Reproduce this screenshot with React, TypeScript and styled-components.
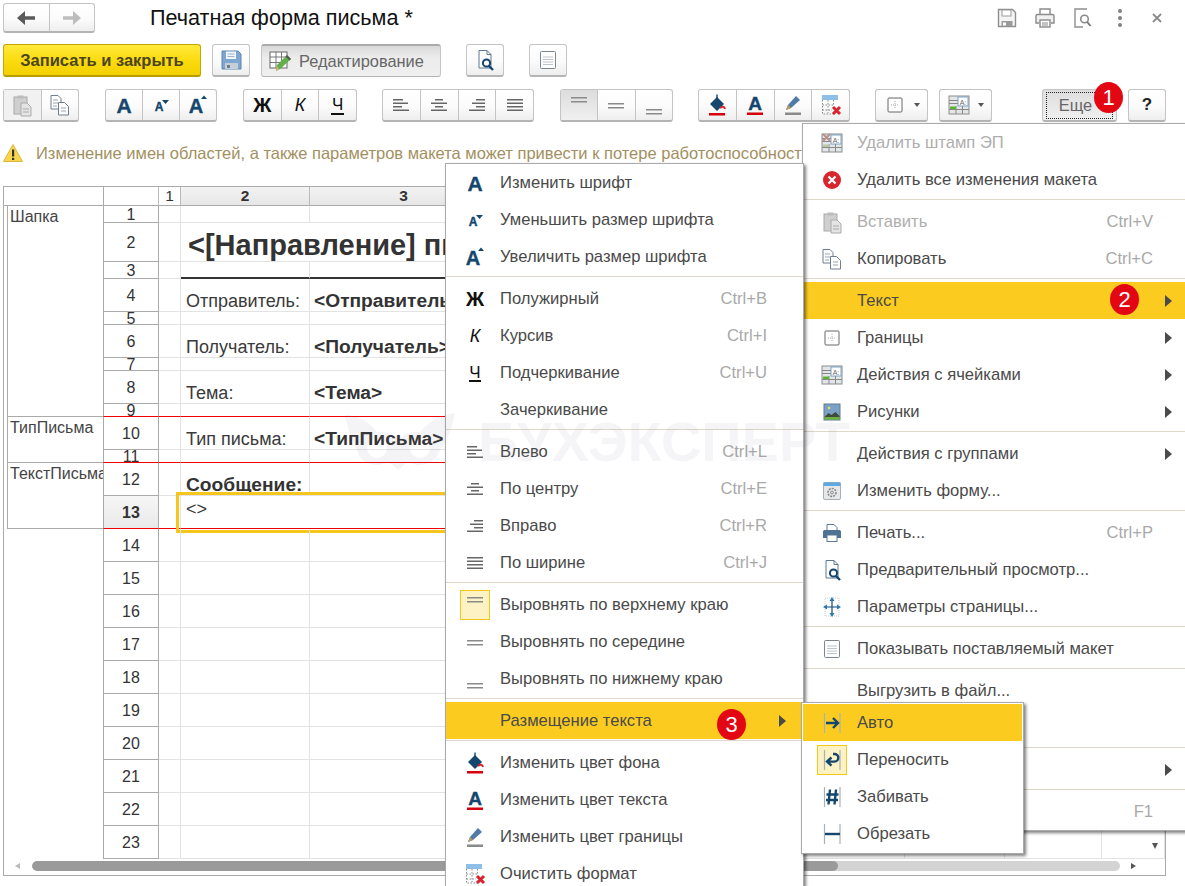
import React from "react";
import styled, { createGlobalStyle, css } from "styled-components";

const navy = "#14466e";

const Global = createGlobalStyle`
  html, body { margin: 0; padding: 0; background: #fff; }
  body { font-family: "Liberation Sans", Arial, sans-serif; color: #444; }
  * { box-sizing: border-box; }
`;

const Page = styled.div`
  position: relative;
  width: 1185px;
  height: 886px;
  overflow: hidden;
  background: #fff;
`;

const HeaderBar = styled.header`
  display: flex;
  align-items: center;
  height: 33px;
  padding: 3px 9px 0 3px;
`;
const Title = styled.h1`
  margin: 0 0 0 55px;
  font-size: 21.6px;
  font-weight: 400;
  color: #111;
  flex: 1;
  line-height: 30px;
`;
const HeaderTools = styled.div`
  display: flex;
  align-items: center;
`;
const HeaderTool = styled.span`
  width: 37.5px;
  height: 24px;
  display: flex;
  align-items: center;
  justify-content: center;
`;

const CommandRow = styled.div`
  display: flex;
  align-items: stretch;
  height: 33px;
  margin-top: ${(p) => p.$top}px;
  padding-left: 3px;
`;

const buttonBase = css`
  display: flex;
  align-items: center;
  justify-content: center;
  height: 33px;
  border: 1px solid #c4c4c4;
  border-bottom: 2px solid #b4b4b4;
  border-radius: 3px;
  background: linear-gradient(#ffffff 0%, #fbfbfb 55%, #eeeeee 100%);
  padding: 0;
`;
const Yellow = styled.div`
  ${buttonBase};
  width: 198px;
  margin-right: 11px;
  border: 1px solid #c5a600;
  border-bottom: 2px solid #b99d00;
  background: linear-gradient(#ffe93c 0%, #fbdc10 50%, #f3d000 100%);
  font-size: 16.5px;
  font-weight: 700;
  color: #4c4520;
`;
const ToolButton = styled.div`
  ${buttonBase};
  width: ${(p) => p.$w || 38}px;
  margin-left: ${(p) => p.$ml || 0}px;
`;
const PressedButton = styled.div`
  ${buttonBase};
  width: 180px;
  margin-left: 11px;
  padding-left: 6px;
  justify-content: flex-start;
  gap: 7px;
  border-bottom: 1px solid #b4b4b4;
  border-top: 2px solid #aaa;
  background: linear-gradient(#d9d9d9 0%, #ececec 40%, #efefef 100%);
  font-size: 16.4px;
  color: #666;
`;
const Group = styled.div`
  display: flex;
  flex: none;
  width: ${(p) => p.$w}px;
  height: ${(p) => p.$h || 33}px;
  margin-left: ${(p) => p.$ml || 0}px;
  border: 1px solid #c4c4c4;
  border-bottom: 2px solid #b4b4b4;
  border-radius: 3px;
  overflow: hidden;
  background: linear-gradient(#ffffff 0%, #fbfbfb 55%, #eeeeee 100%);
`;
const Segment = styled.div`
  flex: 1;
  display: flex;
  align-items: center;
  justify-content: center;
  border-left: ${(p) => (p.$first ? "none" : "1px solid #c4c4c4")};
  ${(p) => p.$on && "background: linear-gradient(#dcdcdc, #f0f0f0);"}
  ${(p) => p.$dim && "background: #f1f1f1;"}
`;
const GlyphBold = styled.span`
  font-size: 20px;
  font-weight: 700;
  color: #111;
`;
const GlyphItalic = styled.span`
  font-size: 18px;
  font-style: italic;
  color: #111;
`;
const GlyphUnder = styled.span`
  font-size: 17px;
  color: #111;
  border-bottom: 2px solid #111;
  line-height: 17px;
  padding: 0 1px;
`;
const Caret = styled.i`
  width: 0;
  height: 0;
  border-left: 3.5px solid transparent;
  border-right: 3.5px solid transparent;
  border-top: 4px solid #555;
  margin-left: 7px;
`;
const MoreButton = styled.div`
  ${buttonBase};
  position: relative;
  width: 75px;
  margin-left: 50px;
  padding-right: 8px;
  background: linear-gradient(#dedede, #f0f0f0);
  font-size: 16.4px;
  color: #666;
  &::after {
    content: "";
    position: absolute;
    inset: 2px 3px 1px 3px;
    border: 1px dotted #222;
  }
`;
const Help = styled.div`
  ${buttonBase};
  width: 38px;
  margin-left: 11px;
  font-size: 17px;
  font-weight: 700;
  color: #222;
`;

const Warning = styled.div`
  display: flex;
  align-items: center;
  height: 64px;
  padding: 0 0 2px 3px;
  gap: 13px;
  font-size: 16.5px;
  color: #a3905f;
  white-space: nowrap;
`;

const Sheet = styled.section`
  margin-left: 3px;
  width: 1163px;
  height: 690px;
  border: 1px solid #aaa;
  display: flex;
  flex-direction: column;
  position: relative;
`;
const SheetHead = styled.div`
  display: flex;
  height: 19px;
  flex: none;
`;
const Corner = styled.div`
  width: 99px;
  border-bottom: 1px solid #aaa;
`;
const HeadCell = styled.div`
  flex: ${(p) => (p.$w ? `0 0 ${p.$w}px` : "1")};
  display: flex;
  align-items: center;
  justify-content: center;
  font-size: 15.5px;
  color: #333;
  border-left: ${(p) => (p.$edge ? "1px solid #aaa" : "none")};
  border-right: 1px solid #bbb;
  border-bottom: 1px solid #aaa;
  ${(p) => p.$sel && "font-weight:700; background:linear-gradient(#f3f3f3,#e6e6e6);"}
`;
const SheetBody = styled.div`
  flex: 1;
  display: flex;
  min-height: 0;
  overflow: hidden;
`;
const Groups = styled.div`
  width: 99px;
  flex: none;
  padding-left: 3px;
`;
const Band = styled.div`
  height: ${(p) => p.$h}px;
  border-left: 1px solid #aaa;
  border-bottom: 1px solid #aaa;
  padding: 2px 0 0 2px;
  font-size: 16px;
  line-height: 18px;
  color: #444;
  overflow: hidden;
  white-space: nowrap;
`;
const Rows = styled.div`
  flex: 1;
  min-width: 0;
`;
const Row = styled.div`
  position: relative;
  display: flex;
  height: ${(p) => p.$h}px;
`;
const RowNo = styled.div`
  flex: 0 0 56px;
  display: flex;
  align-items: center;
  justify-content: center;
  overflow: hidden;
  padding-top: 1px;
  font-size: 16px;
  line-height: 18px;
  color: #333;
  border-left: 1px solid #aaa;
  border-right: 1px solid #aaa;
  border-bottom: 1px solid ${(p) => (p.$line === "red" ? "#f00000" : "#aaa")};
  background: #fff;
  ${(p) => p.$on && "font-weight:700; background:linear-gradient(#f6f6f6,#e9e9e9);"}
`;
const Cell = styled.div`
  flex: ${(p) => (p.$w ? `0 0 ${p.$w}px` : "1")};
  display: flex;
  align-items: ${(p) => p.$align || "flex-end"};
  padding: ${(p) => p.$pad || "0 0 0 5px"};
  white-space: nowrap;
  font-size: 18px;
  line-height: 20px;
  color: #3a3a3a;
  border-right: ${(p) => (p.$open ? "none" : "1px solid #e3e3e3")};
  border-bottom: ${(p) =>
    p.$line === "red"
      ? "1px solid #f00000"
      : p.$line === "thick"
      ? "2px solid #333"
      : "1px solid #e3e3e3"};
`;
const Strong = styled.b`
  font-size: 19.2px;
  font-weight: 700;
  color: #333;
`;
const BigTitle = styled.b`
  font-size: 29px;
  line-height: 32px;
  font-weight: 700;
  color: #333;
`;
const Message = styled.b`
  font-size: 19.2px;
  line-height: 20px;
  color: #333;
`;
const Selection = styled.div`
  position: absolute;
  left: 73px;
  top: -4px;
  width: 500px;
  height: 41px;
  border: 3px solid #f6c61c;
  pointer-events: none;
`;
const DownMark = styled.i`
  position: absolute;
  right: 7px;
  bottom: 26px;
  width: 0;
  height: 0;
  border-left: 3.5px solid transparent;
  border-right: 3.5px solid transparent;
  border-top: 6px solid #555;
`;
const ScrollRow = styled.div`
  flex: none;
  height: 16px;
  display: flex;
  align-items: center;
  padding: 0 0 2px 11px;
`;
const ArrowL = styled.i`
  width: 0;
  height: 0;
  border-top: 3px solid transparent;
  border-bottom: 3px solid transparent;
  border-right: 5px solid #bbb;
  margin-right: 12px;
`;
const ArrowR = styled.i`
  width: 0;
  height: 0;
  border-top: 3px solid transparent;
  border-bottom: 3px solid transparent;
  border-left: 5px solid #555;
  margin-left: 11px;
`;
const Track = styled.div`
  width: 1088px;
  height: 10px;
  border-radius: 5px;
  background: #d3d3d3;
  overflow: hidden;
`;
const Thumb = styled.div`
  height: 100%;
  border-radius: 5px;
  background: #9a9a9a;
`;

const Menu = styled.nav`
  position: absolute;
  left: ${(p) => p.$x}px;
  top: ${(p) => p.$y}px;
  width: ${(p) => p.$w}px;
  z-index: ${(p) => p.$z};
  background: #fff;
  border: 1px solid #aaa;
  box-shadow: 2px 2px 3px rgba(0, 0, 0, 0.5);
  padding: ${(p) => p.$pad || "0"};
`;
const Item = styled.div`
  position: relative;
  height: 37px;
  display: flex;
  align-items: center;
  padding-left: 17px;
  padding-right: ${(p) => p.$pr ?? 17}px;
  font-size: 16.6px;
  white-space: nowrap;
  color: ${(p) => (p.$off ? "#aeaeae" : "#4a4a4a")};
  background: ${(p) => (p.$hl ? "#fbcc1f" : "transparent")};
`;
const IconSlot = styled.span`
  width: 24px;
  height: 24px;
  flex: none;
  margin-right: 13px;
  display: block;
  ${(p) =>
    p.$active &&
    "background:#fdf2c4; box-shadow:0 0 0 2px #fdf2c4, 0 0 0 3px #f6c61c;"}
`;
const Shortcut = styled.span`
  margin-left: auto;
  color: #a9a9a9;
`;
const Chevron = styled.i`
  flex: none;
  width: 7px;
  height: 12px;
  margin-left: ${(p) => (p.$auto ? "auto" : "12px")};
  ${(p) =>
    p.$show
      ? `border-top:6px solid transparent;border-bottom:6px solid transparent;border-left:7px solid #4a4a4a;`
      : ""}
`;
const Sep = styled.div`
  height: 1px;
  margin: 1px 0 3px;
  background: #ddd8c8;
`;
const Badge = styled.span`
  position: absolute;
  left: ${(p) => p.$x}px;
  top: ${(p) => p.$y}px;
  width: 29px;
  height: 31px;
  border-radius: 50%;
  background: #e30613;
  color: #fff;
  font-size: 22px;
  display: flex;
  align-items: center;
  justify-content: center;
  z-index: 5;
`;
const Watermark = styled.div`
  position: absolute;
  left: 345px;
  top: 412px;
  z-index: 20;
  display: flex;
  align-items: center;
  gap: 7px;
  pointer-events: none;
  font-size: 56px;
  font-weight: 700;
  line-height: 60px;
  color: rgba(110, 120, 140, 0.07);
`;

/* ---------- icons ---------- */
const S: React.FC<{ children: React.ReactNode; w?: number; h?: number; box?: string }> = ({ children, w = 24, h = 24, box }) => (
  <svg width={w} height={h} viewBox={box || `0 0 ${w} ${h}`} style={{ display: "block" }}>
    {children}
  </svg>
);
const Lines = ({ l, c = "#666", t = 1.5 }: { l: number[][]; c?: string; t?: number }) => (
  <S>
    {l.map(([x, y, w], i) => (
      <rect key={i} x={x} y={y} width={w} height={t} fill={c} />
    ))}
  </S>
);
const AlignL = () => <Lines l={[[4, 6, 10], [4, 9.5, 15], [4, 13, 9], [4, 16.5, 16]]} />;
const AlignC = () => <Lines l={[[8, 6, 8], [4, 9.5, 16], [8, 13, 8], [4, 16.5, 16]]} />;
const AlignR = () => <Lines l={[[11, 6, 9], [7, 9.5, 13], [11, 13, 9], [4, 16.5, 16]]} />;
const AlignJ = () => <Lines l={[[4, 6, 16], [4, 9.5, 16], [4, 13, 16], [4, 16.5, 16]]} />;
const VTop = () => <Lines c="#8a8a8a" l={[[4, 4, 16], [4, 8, 16]]} />;
const VMid = () => <Lines c="#8a8a8a" l={[[4, 10, 16], [4, 14, 16]]} />;
const VBot = () => <Lines c="#8a8a8a" l={[[4, 16, 16], [4, 20, 16]]} />;

const LetterA = ({ size = 21, x = 12, y = 20 }: { size?: number; x?: number; y?: number }) => (
  <text x={x} y={y} fontSize={size} fontWeight={700} fontFamily="Liberation Sans" fill={navy} stroke={navy} strokeWidth={0.4} textAnchor="middle">
    A
  </text>
);
const FontIcon = () => <S><LetterA /></S>;
const FontDown = () => (
  <S>
    <LetterA size={12} x={10} y={18} />
    <polygon points="13,7 20,7 16.5,11" fill={navy} />
  </S>
);
const FontUp = () => (
  <S>
    <LetterA size={20} x={10} y={20} />
    <polygon points="15,6 21,6 18,2.5" fill={navy} />
  </S>
);
const BoldIcon = () => <S><text x="12" y="19" fontSize="20" fontWeight="700" fontFamily="Liberation Sans" fill="#111" textAnchor="middle">Ж</text></S>;
const ItalicIcon = () => <S><text x="12" y="18" fontSize="18" fontStyle="italic" fontFamily="Liberation Sans" fill="#111" textAnchor="middle">К</text></S>;
const UnderIcon = () => (
  <S>
    <text x="12" y="17" fontSize="17" fontFamily="Liberation Sans" fill="#111" textAnchor="middle">Ч</text>
    <rect x="6" y="19" width="12" height="2" fill="#111" />
  </S>
);
const Fill = () => (
  <S>
    <rect x="11.3" y="1.5" width="1.4" height="6" fill={navy} />
    <polygon points="12,4 5,11 12,18 19,11" fill={navy} />
    <path d="M15 15 q4 -3 5 1" fill="none" stroke="#d8232a" strokeWidth="2" />
    <rect x="4" y="20" width="16" height="2.5" fill="#d8000f" />
  </S>
);
const TextColor = () => (
  <S>
    <LetterA size={19} y={17} />
    <rect x="4" y="19.5" width="16" height="2.5" fill="#d8000f" />
  </S>
);
const Pencil = () => (
  <S>
    <polygon points="15,3 19,7 10,15 5,17 7,12" fill="#4f7ba6" />
    <polygon points="7,12 10,15 5,17" fill="#b89a63" />
    <rect x="4" y="19.5" width="16" height="2.5" fill="#8a8a8a" />
  </S>
);
const ClearFormat = () => (
  <S>
    <rect x="3" y="2" width="16" height="5" fill="#8fbfe6" />
    <path d="M3.5 7V21H16M9 7V20M14.5 7V13M3.5 12H15M3.5 17H13" stroke="#888" strokeDasharray="1.5 1.5" fill="none" />
    <path d="M14 14l7 7M21 14l-7 7" stroke="#d9232e" strokeWidth="3" />
  </S>
);
const BordersIcon = () => (
  <S>
    <rect x="5" y="5" width="14" height="14" rx="1" fill="#fff" stroke="#666" />
    <path d="M12 8v8M8 12h8" stroke="#aaa" strokeDasharray="1 1" />
  </S>
);
const CellsIcon = ({ gray }: { gray?: boolean }) => (
  <S>
    <rect x="2" y="3" width="20" height="18" fill="#e3e6e8" stroke="#8c8c8c" />
    <rect x="11" y="4" width="10" height="9" fill="#fff" stroke="#7da4c6" />
    <text x="16" y="11.5" fontSize="7" fontFamily="Liberation Sans" fill="#666" textAnchor="middle">A:</text>
    <path d="M2 7.5h9M2 10.5h9M2 16.5h20M9 13v8M15.5 13v8" stroke="#888" />
    <rect x="3" y="13.5" width="6" height="2.5" fill={gray ? "#b9c7a8" : "#5ab52e"} />
    {gray && <path d="M3 3l7 7M10 3l-7 7" stroke="#b9928a" strokeWidth="2" />}
  </S>
);
const Paste = () => (
  <S>
    <rect x="4" y="4" width="13" height="17" fill="#cfcfcf" stroke="#aaa" />
    <rect x="7.5" y="2.5" width="6" height="3" fill="#bbb" />
    <path d="M11 10h6l4 4v9H11z" fill="#e4e4e4" stroke="#aaa" />
    <path d="M13 16h6M13 19h6" stroke="#aaa" />
  </S>
);
const Copy = () => (
  <S>
    <path d="M3 2.5h7l3 3V16H3z" fill="#fff" stroke="#6d7f90" />
    <path d="M5 7h5M5 10h5M5 13h4" stroke="#9aa5b0" />
    <path d="M10.5 9.5h6l4 4V22h-10z" fill="#fff" stroke="#6d7f90" />
    <path d="M13 15h5M13 18h5" stroke="#9aa5b0" />
  </S>
);
const Floppy = () => (
  <S>
    <path d="M3 3h16l3 3v15H3z" fill="#7da6d0" stroke="#5a86b2" />
    <rect x="7" y="3.5" width="10" height="7.5" fill="#f2f6fa" />
    <path d="M8.5 6h7M8.5 8.5h7" stroke="#9ab4cc" />
    <rect x="6" y="15" width="13" height="6" fill="#c7cfd6" />
    <rect x="8" y="17" width="3" height="3" fill="#6b7c8c" />
  </S>
);
const EditGrid = () => (
  <S>
    <rect x="2" y="3" width="17" height="16" fill="#fff" stroke="#666" />
    <path d="M2 8h17M2 13.5h17M8 3v16M13.5 3v16" stroke="#777" />
    <polygon points="19,6 23,10 12,20 8,22 9,16" fill="#62b04a" />
    <polygon points="19,6 23,10 21.5,11.5 17.5,7.5" fill="#555" />
    <polygon points="9,17.5 11,20 8,22" fill="#e1b36b" />
  </S>
);
const Preview = () => (
  <S>
    <path d="M6 2.5h8l4 4V20H6z" fill="#fff" stroke="#5c7894" />
    <path d="M14 2.5v4h4" fill="none" stroke="#5c7894" />
    <circle cx="13.5" cy="15" r="3.6" fill="#fff" stroke={navy} strokeWidth="2" />
    <path d="M16 18l4 4" stroke={navy} strokeWidth="2.4" />
  </S>
);
const DocLines = () => (
  <S>
    <rect x="4.5" y="3.5" width="15" height="17" rx="1" fill="#fff" stroke="#7c8690" />
    <path d="M7 9h10M7 11.5h10M7 14h10M7 16.5h10" stroke="#bcc3ca" />
  </S>
);
const DangerCircle = () => (
  <S>
    <circle cx="12" cy="12" r="9" fill="#d7262e" />
    <path d="M8.5 8.5l7 7M15.5 8.5l-7 7" stroke="#fff" strokeWidth="2.2" />
  </S>
);
const Picture = () => (
  <S>
    <rect x="4" y="4" width="16" height="16" fill="#7aa2c8" stroke="#687a8a" />
    <circle cx="9" cy="8" r="1.2" fill="#f4e04a" />
    <path d="M4.5 17l4-4 3 2 4-3 4 4v2h-15z" fill="#3e4a3a" />
    <rect x="4.5" y="17" width="15" height="2.6" fill="#6db33f" />
  </S>
);
const FormGear = () => (
  <S>
    <rect x="3.5" y="3.5" width="17" height="17" rx="1.5" fill="#e6e8ea" stroke="#a8b0b6" />
    <rect x="3.5" y="3.5" width="17" height="3.5" fill="#62a8e0" />
    <circle cx="12" cy="13.5" r="4" fill="none" stroke="#888" strokeWidth="1.6" strokeDasharray="2 1" />
    <circle cx="12" cy="13.5" r="1.4" fill="none" stroke="#888" />
  </S>
);
const PrinterBlue = () => (
  <S>
    <path d="M7 3.5h7l3 3V10H7z" fill="#fff" stroke="#5c7894" />
    <path d="M3 10.5q0-1.5 1.5-1.5h15q1.5 0 1.5 1.5V17H3z" fill="#4f7193" />
    <rect x="7" y="14" width="10" height="6.5" fill="#fff" stroke="#5c7894" />
  </S>
);
const PageParams = () => (
  <S>
    <rect x="5" y="3" width="14" height="18" fill="none" stroke="#c7ccd0" strokeDasharray="1 1" />
    <path d="M12 4v16M5 12h14" stroke={navy} strokeWidth="1.2" />
    <polygon points="12,2 9.5,6 14.5,6" fill="#2a76b0" />
    <polygon points="12,22 9.5,18 14.5,18" fill="#2a76b0" />
    <polygon points="3,12 7,9.5 7,14.5" fill="#2a76b0" />
    <polygon points="21,12 17,9.5 17,14.5" fill="#2a76b0" />
  </S>
);
const Rails = () => <path d="M4.5 2v20M20 2v20" stroke="#a9b1b8" strokeWidth="1.2" />;
const Auto = () => (
  <S>
    <Rails />
    <path d="M6 12h12M13 7l5 5-5 5" fill="none" stroke={navy} strokeWidth="2.4" />
  </S>
);
const Wrap = () => (
  <S>
    <Rails />
    <path d="M13 6h1.5a3.8 3.8 0 0 1 0 7.6H8M11.5 9.5L7 13.6l4.5 4.1" fill="none" stroke={navy} strokeWidth="2.4" />
  </S>
);
const Hash = () => (
  <S>
    <Rails />
    <path d="M10 4.5L8.5 19.5M16 4.5L14.5 19.5M6.5 9.5h12M6 15h12" fill="none" stroke={navy} strokeWidth="2.4" />
  </S>
);
const Cut = () => (
  <S>
    <Rails />
    <path d="M5 12h15" stroke={navy} strokeWidth="2.4" />
  </S>
);
const OutSave = () => (
  <S>
    <path d="M3.5 3.5h14l3 3v14h-17z" fill="#f4f4f4" stroke="#8f8f8f" strokeWidth="1.4" />
    <rect x="7" y="4" width="9" height="6" fill="#fff" stroke="#9a9a9a" />
    <rect x="6.5" y="15" width="11" height="5.5" fill="#9a9a9a" />
    <rect x="8" y="16.5" width="3" height="3" fill="#fff" />
  </S>
);
const OutPrint = () => (
  <S>
    <path d="M7 9V3h10v6" fill="#fff" stroke="#8a8a8a" strokeWidth="1.4" />
    <path d="M6 17H3V10q0-1.5 1.5-1.5h15Q21 8.5 21 10v7h-3" fill="#f0f0f0" stroke="#8a8a8a" strokeWidth="1.4" />
    <rect x="7" y="14" width="10" height="7" fill="#fff" stroke="#8a8a8a" strokeWidth="1.4" />
    <path d="M9 17h6M9 19h6" stroke="#8a8a8a" />
  </S>
);
const OutPreview = () => (
  <S>
    <path d="M17 3H5v18h8" fill="none" stroke="#8f8f8f" strokeWidth="1.4" />
    <circle cx="14.5" cy="13" r="3.8" fill="#fff" stroke="#8a8a8a" strokeWidth="1.6" />
    <path d="M17.3 16l3.2 4" stroke="#7a7a7a" strokeWidth="2" />
  </S>
);
const Dots = () => (
  <S>
    <circle cx="12" cy="5" r="2" fill="#808080" />
    <circle cx="12" cy="12" r="2" fill="#808080" />
    <circle cx="12" cy="19" r="2" fill="#808080" />
  </S>
);
const CloseX = () => (
  <S>
    <path d="M8 8l8 8M16 8l-8 8" stroke="#8a8a8a" strokeWidth="1.8" />
  </S>
);
const NavArrow = ({ right, c }: { right?: boolean; c: string }) => (
  <S>
    <g transform={right ? "" : "matrix(-1 0 0 1 24 0)"}>
      <path d="M3 10.2h10V5l8 7-8 7v-5.2H3z" fill={c} />
    </g>
  </S>
);
const WarnIcon = () => (
  <S w={20} h={20}>
    <polygon points="10,1.5 19.5,18.5 0.5,18.5" fill="#f8d64a" stroke="#dcb640" strokeLinejoin="round" />
    <rect x="9" y="6.5" width="2.2" height="7" fill="#333" />
    <rect x="9" y="14.8" width="2.2" height="2.2" fill="#333" />
  </S>
);
const Owl = () => (
  <svg width="126" height="60" viewBox="0 0 126 60" style={{ display: "block" }}>
    <path
      fillRule="evenodd"
      d="M0 3Q20 4 32 20Q43 18 53 28Q63 18 75 20Q88 4 110 1Q105 26 95 38Q90 53 72 53L62 50L53 58L44 50L34 53Q16 53 12 38Q4 23 0 3Z
         M22 36a10 10 0 1 0 20 0a10 10 0 1 0 -20 0Z M65 36a10 10 0 1 0 20 0a10 10 0 1 0 -20 0Z"
      fill="rgba(110,120,140,0.08)"
    />
  </svg>
);

/* ---------- data ---------- */
type MI = {
  icon?: React.ReactNode; label?: string; short?: string; arrow?: boolean; hl?: boolean;
  off?: boolean; active?: boolean; badge?: [string, number, number]; sep?: boolean;
};
const textMenu: MI[] = [
  { icon: <FontIcon />, label: "Изменить шрифт" },
  { icon: <FontDown />, label: "Уменьшить размер шрифта" },
  { icon: <FontUp />, label: "Увеличить размер шрифта" },
  { sep: true },
  { icon: <BoldIcon />, label: "Полужирный", short: "Ctrl+B" },
  { icon: <ItalicIcon />, label: "Курсив", short: "Ctrl+I" },
  { icon: <UnderIcon />, label: "Подчеркивание", short: "Ctrl+U" },
  { label: "Зачеркивание" },
  { sep: true },
  { icon: <AlignL />, label: "Влево", short: "Ctrl+L" },
  { icon: <AlignC />, label: "По центру", short: "Ctrl+E" },
  { icon: <AlignR />, label: "Вправо", short: "Ctrl+R" },
  { icon: <AlignJ />, label: "По ширине", short: "Ctrl+J" },
  { sep: true },
  { icon: <VTop />, active: true, label: "Выровнять по верхнему краю" },
  { icon: <VMid />, label: "Выровнять по середине" },
  { icon: <VBot />, label: "Выровнять по нижнему краю" },
  { sep: true },
  { label: "Размещение текста", arrow: true, hl: true, badge: ["3", 271, 7] },
  { sep: true },
  { icon: <Fill />, label: "Изменить цвет фона" },
  { icon: <TextColor />, label: "Изменить цвет текста" },
  { icon: <Pencil />, label: "Изменить цвет границы" },
  { icon: <ClearFormat />, label: "Очистить формат" },
];
const moreMenu: MI[] = [
  { icon: <CellsIcon gray />, label: "Удалить штамп ЭП", off: true },
  { icon: <DangerCircle />, label: "Удалить все изменения макета" },
  { sep: true },
  { icon: <Paste />, label: "Вставить", short: "Ctrl+V", off: true },
  { icon: <Copy />, label: "Копировать", short: "Ctrl+C" },
  { sep: true },
  { label: "Текст", arrow: true, hl: true, badge: ["2", 307, 2] },
  { icon: <BordersIcon />, label: "Границы", arrow: true },
  { icon: <CellsIcon />, label: "Действия с ячейками", arrow: true },
  { icon: <Picture />, label: "Рисунки", arrow: true },
  { sep: true },
  { label: "Действия с группами", arrow: true },
  { icon: <FormGear />, label: "Изменить форму..." },
  { sep: true },
  { icon: <PrinterBlue />, label: "Печать...", short: "Ctrl+P" },
  { icon: <Preview />, label: "Предварительный просмотр..." },
  { icon: <PageParams />, label: "Параметры страницы..." },
  { sep: true },
  { icon: <DocLines />, label: "Показывать поставляемый макет" },
  { sep: true },
  { label: "Выгрузить в файл..." },
  { label: "Загрузить из файла..." },
  { sep: true },
  { label: "Сервис", arrow: true },
  { sep: true },
  { label: "Справка", short: "F1" },
];
const placeMenu: MI[] = [
  { icon: <Auto />, label: "Авто", hl: true },
  { icon: <Wrap />, label: "Переносить", active: true },
  { icon: <Hash />, label: "Забивать" },
  { icon: <Cut />, label: "Обрезать" },
];

const MenuItems = ({ items, tail = true }: { items: MI[]; tail?: boolean }) => (
  <>
    {items.map((it, i) =>
      it.sep ? (
        <Sep key={i} />
      ) : (
        <Item key={i} $hl={it.hl} $off={it.off} $pr={tail ? undefined : 0}>
          <IconSlot $active={it.active}>{it.icon}</IconSlot>
          {it.label}
          {it.badge && <Badge $x={it.badge[1]} $y={it.badge[2]}>{it.badge[0]}</Badge>}
          {tail && (
            <>
              {it.short && <Shortcut>{it.short}</Shortcut>}
              <Chevron $show={it.arrow} $auto={!it.short} />
            </>
          )}
        </Item>
      )
    )}
  </>
);

type RowDef = { n: number; h: number; line?: string };
const rowDefs: RowDef[] = [
  { n: 1, h: 17 }, { n: 2, h: 39 }, { n: 3, h: 17, line: "thick" }, { n: 4, h: 33 }, { n: 5, h: 13 },
  { n: 6, h: 33 }, { n: 7, h: 13 }, { n: 8, h: 33 }, { n: 9, h: 13, line: "red" }, { n: 10, h: 33 },
  { n: 11, h: 13, line: "red" }, { n: 12, h: 33 }, { n: 13, h: 33, line: "red" },
  ...Array.from({ length: 10 }, (_, i) => ({ n: 14 + i, h: 33 })),
];
const labels: Record<number, [string, string]> = {
  4: ["Отправитель:", "<Отправитель>"],
  6: ["Получатель:", "<Получатель>"],
  8: ["Тема:", "<Тема>"],
  10: ["Тип письма:", "<ТипПисьма>"],
};

const SheetRow = ({ d }: { d: RowDef }) => {
  const line = d.line;
  const label = labels[d.n];
  const red = line === "red" ? "red" : undefined;
  return (
    <Row $h={d.h}>
      <RowNo $on={d.n === 13} $line={red}>{d.n}</RowNo>
      <Cell $w={22} $line={red} />
      {d.n === 2 ? (
        <Cell $w={129} $open $align="center" $pad="6px 0 0 7px"><BigTitle>{"<[Направление] письма>"}</BigTitle></Cell>
      ) : d.n === 12 ? (
        <Cell $w={129}><Message>Сообщение:</Message></Cell>
      ) : d.n === 13 ? (
        <Cell $w={129} $open $line="red" $align="flex-start" $pad="3px 0 0 5px">{"<>"}</Cell>
      ) : (
        <Cell $w={129} $line={line}>{label && label[0]}</Cell>
      )}
      <Cell $w={188} $line={line} $open={d.n === 2 || d.n === 13} $pad="0 0 0 4px">{label && <Strong>{label[1]}</Strong>}</Cell>
      <Cell $w={407} $line={line} />
      <Cell $w={100} $line={line} />
      <Cell $w={97} $line={line} />
      <Cell $line={line} />
      {d.n === 13 && <Selection />}
    </Row>
  );
};

export default function App() {
  return (
    <Page>
      <Global />
      <HeaderBar>
        <Group $w={92} $h={30}>
          <Segment $first><NavArrow c="#5a5a5a" /></Segment>
          <Segment><NavArrow right c="#bdbdbd" /></Segment>
        </Group>
        <Title>Печатная форма письма *</Title>
        <HeaderTools>
          <HeaderTool><OutSave /></HeaderTool>
          <HeaderTool><OutPrint /></HeaderTool>
          <HeaderTool><OutPreview /></HeaderTool>
          <HeaderTool><Dots /></HeaderTool>
          <HeaderTool><CloseX /></HeaderTool>
        </HeaderTools>
      </HeaderBar>

      <CommandRow $top={11}>
        <Yellow>Записать и закрыть</Yellow>
        <ToolButton><Floppy /></ToolButton>
        <PressedButton><EditGrid />Редактирование</PressedButton>
        <ToolButton $ml={25}><Preview /></ToolButton>
        <ToolButton $ml={25}><DocLines /></ToolButton>
      </CommandRow>

      <CommandRow $top={12}>
        <Group $w={76}>
          <Segment $first $dim><Paste /></Segment>
          <Segment><Copy /></Segment>
        </Group>
        <Group $ml={26} $w={112}>
          <Segment $first><FontIcon /></Segment>
          <Segment><FontDown /></Segment>
          <Segment><FontUp /></Segment>
        </Group>
        <Group $ml={26} $w={114}>
          <Segment $first><GlyphBold>Ж</GlyphBold></Segment>
          <Segment><GlyphItalic>К</GlyphItalic></Segment>
          <Segment><GlyphUnder>Ч</GlyphUnder></Segment>
        </Group>
        <Group $ml={25} $w={152}>
          <Segment $first><AlignL /></Segment>
          <Segment><AlignC /></Segment>
          <Segment><AlignR /></Segment>
          <Segment><AlignJ /></Segment>
        </Group>
        <Group $ml={26} $w={113}>
          <Segment $first $on><VTop /></Segment>
          <Segment><VMid /></Segment>
          <Segment><VBot /></Segment>
        </Group>
        <Group $ml={25} $w={152}>
          <Segment $first><Fill /></Segment>
          <Segment><TextColor /></Segment>
          <Segment><Pencil /></Segment>
          <Segment><ClearFormat /></Segment>
        </Group>
        <ToolButton $ml={25} $w={53}><BordersIcon /><Caret /></ToolButton>
        <ToolButton $ml={11} $w={53}><CellsIcon /><Caret /></ToolButton>
        <MoreButton>
          Еще
          <Badge $x={51} $y={-8}>1</Badge>
        </MoreButton>
        <Help>?</Help>
      </CommandRow>

      <Warning>
        <WarnIcon />
        Изменение имен областей, а также параметров макета может привести к потере работоспособности макета
      </Warning>

      <Sheet>
        <SheetHead>
          <Corner />
          <HeadCell $w={56} $edge />
          <HeadCell $w={22}>1</HeadCell>
          <HeadCell $w={129} $sel>2</HeadCell>
          <HeadCell $w={188} $sel>3</HeadCell>
          <HeadCell $w={407}>4</HeadCell>
          <HeadCell $w={100}>5</HeadCell>
          <HeadCell $w={97}>6</HeadCell>
          <HeadCell>7</HeadCell>
        </SheetHead>
        <SheetBody>
          <Groups>
            <Band $h={211}>Шапка</Band>
            <Band $h={46}>ТипПисьма</Band>
            <Band $h={66}>ТекстПисьма</Band>
          </Groups>
          <Rows>
            {rowDefs.map((d) => <SheetRow key={d.n} d={d} />)}
          </Rows>
        </SheetBody>
        <DownMark />
        <ScrollRow>
          <ArrowL />
          <Track><Thumb style={{ width: `${(806 / 1088) * 100}%` }} /></Track>
          <ArrowR />
        </ScrollRow>
      </Sheet>

      <Menu $x={802} $y={123} $w={388} $z={2}>
        <MenuItems items={moreMenu} />
      </Menu>
      <Menu $x={445} $y={163} $w={359} $z={3}>
        <MenuItems items={textMenu} />
      </Menu>
      <Menu $x={801} $y={702} $w={223} $z={4} $pad="1px">
        <MenuItems items={placeMenu} tail={false} />
      </Menu>

      <Watermark>
        <Owl />
        БУХЭКСПЕРТ
      </Watermark>
    </Page>
  );
}
